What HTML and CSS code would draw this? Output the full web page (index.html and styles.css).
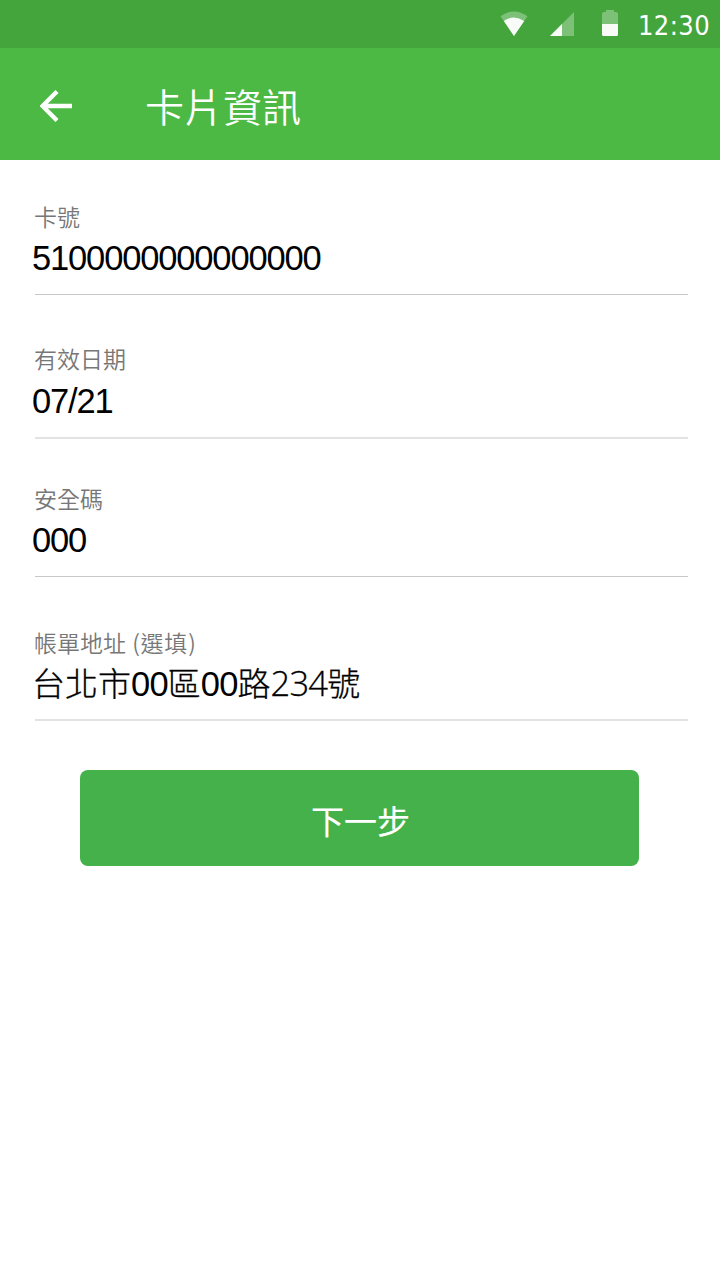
FILE: index.html
```
<!DOCTYPE html>
<html lang="zh-TW">
<head>
    <meta charset="UTF-8">
    <meta name="viewport" content="width=device-width, initial-scale=1.0">
    <title>卡片資訊</title>
    <link rel="stylesheet" href="styles.css">
</head>
<body>
    <div class="status-bar">
        <svg class="wifi" width="28" height="26" viewBox="0 0 28 26">
            <path d="M0.5 5.3 Q14 -4.5 27.5 5.3 L14 25 Z" fill="#fff" fill-opacity="0.3"/>
            <path d="M3.8 10 Q14 3 24.2 10 L14 25 Z" fill="#f8fbf8"/>
        </svg>
        <svg class="signal" width="24" height="24" viewBox="0 0 24 24">
            <path d="M24 0 V24 H0 Z" fill="#fff" fill-opacity="0.3"/>
            <path d="M12 12 V24 H0 Z" fill="#f8fbf8"/>
        </svg>
        <svg class="battery" width="16" height="26" viewBox="0 0 16 26">
            <path d="M4 0 H12 V2 H14 Q16 2 16 4 V14 H0 V4 Q0 2 2 2 H4 Z" fill="#fff" fill-opacity="0.3"/>
            <path d="M0 14 H16 V24.5 Q16 26 14.5 26 H1.5 Q0 26 0 24.5 Z" fill="#f8fbf8"/>
        </svg>
        <span class="time">12:30</span>
    </div>

    <header class="app-bar">
        <svg class="back" width="32" height="32" viewBox="0 0 32 32">
            <path d="M17 1.5 L2.5 16 L17 30.5 M2.5 16 H32" fill="none" stroke="#fff" stroke-width="4.4"/>
        </svg>
        <h1>卡片資訊</h1>
    </header>

    <main class="form">
        <div class="field">
            <div class="label">卡號</div>
            <div class="value">5100000000000000</div>
        </div>
        <div class="field field-date">
            <div class="label">有效日期</div>
            <div class="value">07/21</div>
        </div>
        <div class="field field-code">
            <div class="label">安全碼</div>
            <div class="value">000</div>
        </div>
        <div class="field field-address">
            <div class="label">帳單地址 <span class="optional">(選填)</span></div>
            <div class="value address">台北市<span class="num">00</span>區<span class="num">00</span>路<span class="house">234</span>號</div>
        </div>
        <button class="next" type="button">下一步</button>
    </main>
</body>
</html>
```

FILE: styles.css
```
* {
    box-sizing: border-box;
}

body {
    margin: 0;
    min-height: 1280px;
    background: #fff;
    font-family: "Liberation Sans", "Noto Sans CJK TC", sans-serif;
}

/* 狀態列 */
.status-bar {
    display: flex;
    justify-content: flex-end;
    align-items: flex-start;
    height: 48px;
    padding: 10px 10px 0 0;
    background: #45a53d;
}

.wifi {
    margin-top: 1px;
}

.signal {
    margin: 2px 28px 0 22px;
}

.time {
    width: 72px;
    margin-left: 20px;
    font-family: "DejaVu Sans Condensed", "DejaVu Sans", sans-serif;
    font-stretch: condensed;
    font-size: 27px;
    line-height: 32px;
    letter-spacing: 0.4px;
    color: #fff;
    white-space: nowrap;
}

/* 標題列 */
.app-bar {
    display: flex;
    align-items: center;
    height: 112px;
    padding: 4px 0 0 40px;
    background: #4cb944;
}

.app-bar h1 {
    margin: -2px 0 0 73px;
    font-family: "Noto Sans CJK TC", sans-serif;
    font-size: 39px;
    font-weight: 350;
    line-height: 60px;
    color: #fff;
}

/* 表單 */
.form {
    padding: 40px 32px 0 35px;
}

.field {
    display: flow-root;
    height: 95px;
    border-bottom: 1px solid #c8c8c8;
}

.field-date {
    height: 97px;
    margin-top: 47px;
    border-bottom: 2px solid #e3e3e3;
}

.field-code {
    margin-top: 43px;
}

.field-address {
    height: 96px;
    margin-top: 48px;
    border-bottom: 2px solid #e3e3e3;
}

.label {
    margin: -1px 0 1px -1px;
    font-family: "Noto Sans CJK TC", sans-serif;
    font-size: 23px;
    font-weight: 350;
    line-height: 34px;
    color: #777;
}

.field-address .label {
    margin: 0 0 0 -1px;
}

.optional {
    margin-left: 1px;
    letter-spacing: 0.8px;
}

.value {
    margin-left: -3px;
    font-size: 34.5px;
    line-height: 48px;
    letter-spacing: -1.15px;
    color: #000;
    white-space: nowrap;
}

.field-date .value {
    padding-top: 1px;
}

.address {
    padding-top: 1px;
    font-family: "Noto Sans CJK TC", sans-serif;
    font-size: 33px;
    font-weight: 300;
    line-height: 45px;
    letter-spacing: 0;
    -webkit-text-stroke: 0.3px #000;
}

.address .num {
    font-family: "Liberation Sans", sans-serif;
    font-size: 34.5px;
    font-weight: 400;
    letter-spacing: -0.8px;
    -webkit-text-stroke: 0;
}

.address .house {
    font-family: "Open Sans", sans-serif;
    font-size: 34.5px;
    font-weight: 300;
    letter-spacing: -0.8px;
}

.next {
    display: block;
    width: 559px;
    height: 96px;
    margin: 49px 0 0 45px;
    padding: 3px 0 0 2px;
    border: 0;
    border-radius: 8px;
    background: #44b14a;
    font-family: "Noto Sans CJK TC", sans-serif;
    font-size: 33px;
    font-weight: 400;
    -webkit-text-stroke: 0.15px #fff;
    color: #fff;
}
```
